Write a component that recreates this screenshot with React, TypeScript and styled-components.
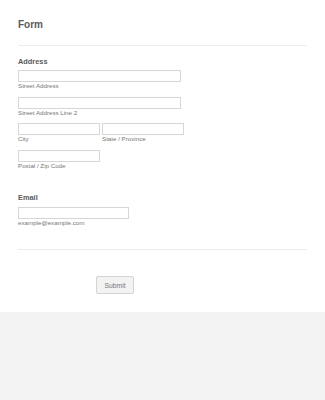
import styled, { createGlobalStyle } from "styled-components";

const GlobalStyle = createGlobalStyle`
  html, body {
    margin: 0;
    padding: 0;
    background: #f3f3f3;
    font-family: "Liberation Sans", Arial, sans-serif;
  }
`;

const Page = styled.div`
  width: 325px;
  min-height: 400px;
  display: flex;
  flex-direction: column;
  background: #f3f3f3;
`;

const FormCard = styled.div`
  background: #fff;
  padding: 18px 18px 18px;
  display: flex;
  flex-direction: column;
`;

const Title = styled.h1`
  margin: 0;
  font-size: 10px;
  line-height: 14px;
  font-weight: 600;
  color: #5a5a5a;
`;

const Divider = styled.hr<{ $top: number }>`
  margin: ${(p) => p.$top}px 0 0;
  border: none;
  border-top: 1px solid #ececec;
  width: 289px;
`;

const Section = styled.div<{ $top: number }>`
  margin-top: ${(p) => p.$top}px;
  display: flex;
  flex-direction: column;
`;

const Label = styled.div`
  font-size: 7.4px;
  line-height: 10px;
  font-weight: 600;
  color: #5a5a5a;
  margin-bottom: 3.5px;
`;

const Fields = styled.div`
  display: flex;
  flex-direction: column;
  gap: 6.5px;
`;

const Row = styled.div`
  display: flex;
  gap: 2px;
`;

const Field = styled.div`
  display: flex;
  flex-direction: column;
`;

const Input = styled.div<{ $w: number }>`
  box-sizing: border-box;
  width: ${(p) => p.$w}px;
  height: 12px;
  border: 1px solid #d6d6d6;
  background: #fff;
`;

const SubLabel = styled.div`
  font-size: 6.2px;
  line-height: 8px;
  color: #777;
  white-space: nowrap;
`;

const Submit = styled.button`
  margin: 26px 0 0 78px;
  width: 38px;
  height: 18px;
  box-sizing: border-box;
  border: 1px solid #d4d4d4;
  border-radius: 2px;
  background: #f3f3f3;
  color: #777;
  font-family: "Liberation Sans", Arial, sans-serif;
  font-size: 6.8px;
  padding: 0;
`;

export default function App() {
  return (
    <Page>
      <GlobalStyle />
      <FormCard>
        <Title>Form</Title>
        <Divider $top={13} />
        <Section $top={10.5}>
          <Label>Address</Label>
          <Fields>
            <Field>
              <Input $w={163} />
              <SubLabel>Street Address</SubLabel>
            </Field>
            <Field>
              <Input $w={163} />
              <SubLabel>Street Address Line 2</SubLabel>
            </Field>
            <Row>
              <Field>
                <Input $w={82} />
                <SubLabel>City</SubLabel>
              </Field>
              <Field>
                <Input $w={82} />
                <SubLabel>State / Province</SubLabel>
              </Field>
            </Row>
            <Field>
              <Input $w={82} />
              <SubLabel>Postal / Zip Code</SubLabel>
            </Field>
          </Fields>
        </Section>
        <Section $top={23.5}>
          <Label>Email</Label>
          <Field>
            <Input $w={111} />
            <SubLabel>example@example.com</SubLabel>
          </Field>
        </Section>
        <Divider $top={22.5} />
        <div>
          <Submit type="button">Submit</Submit>
        </div>
      </FormCard>
    </Page>
  );
}
